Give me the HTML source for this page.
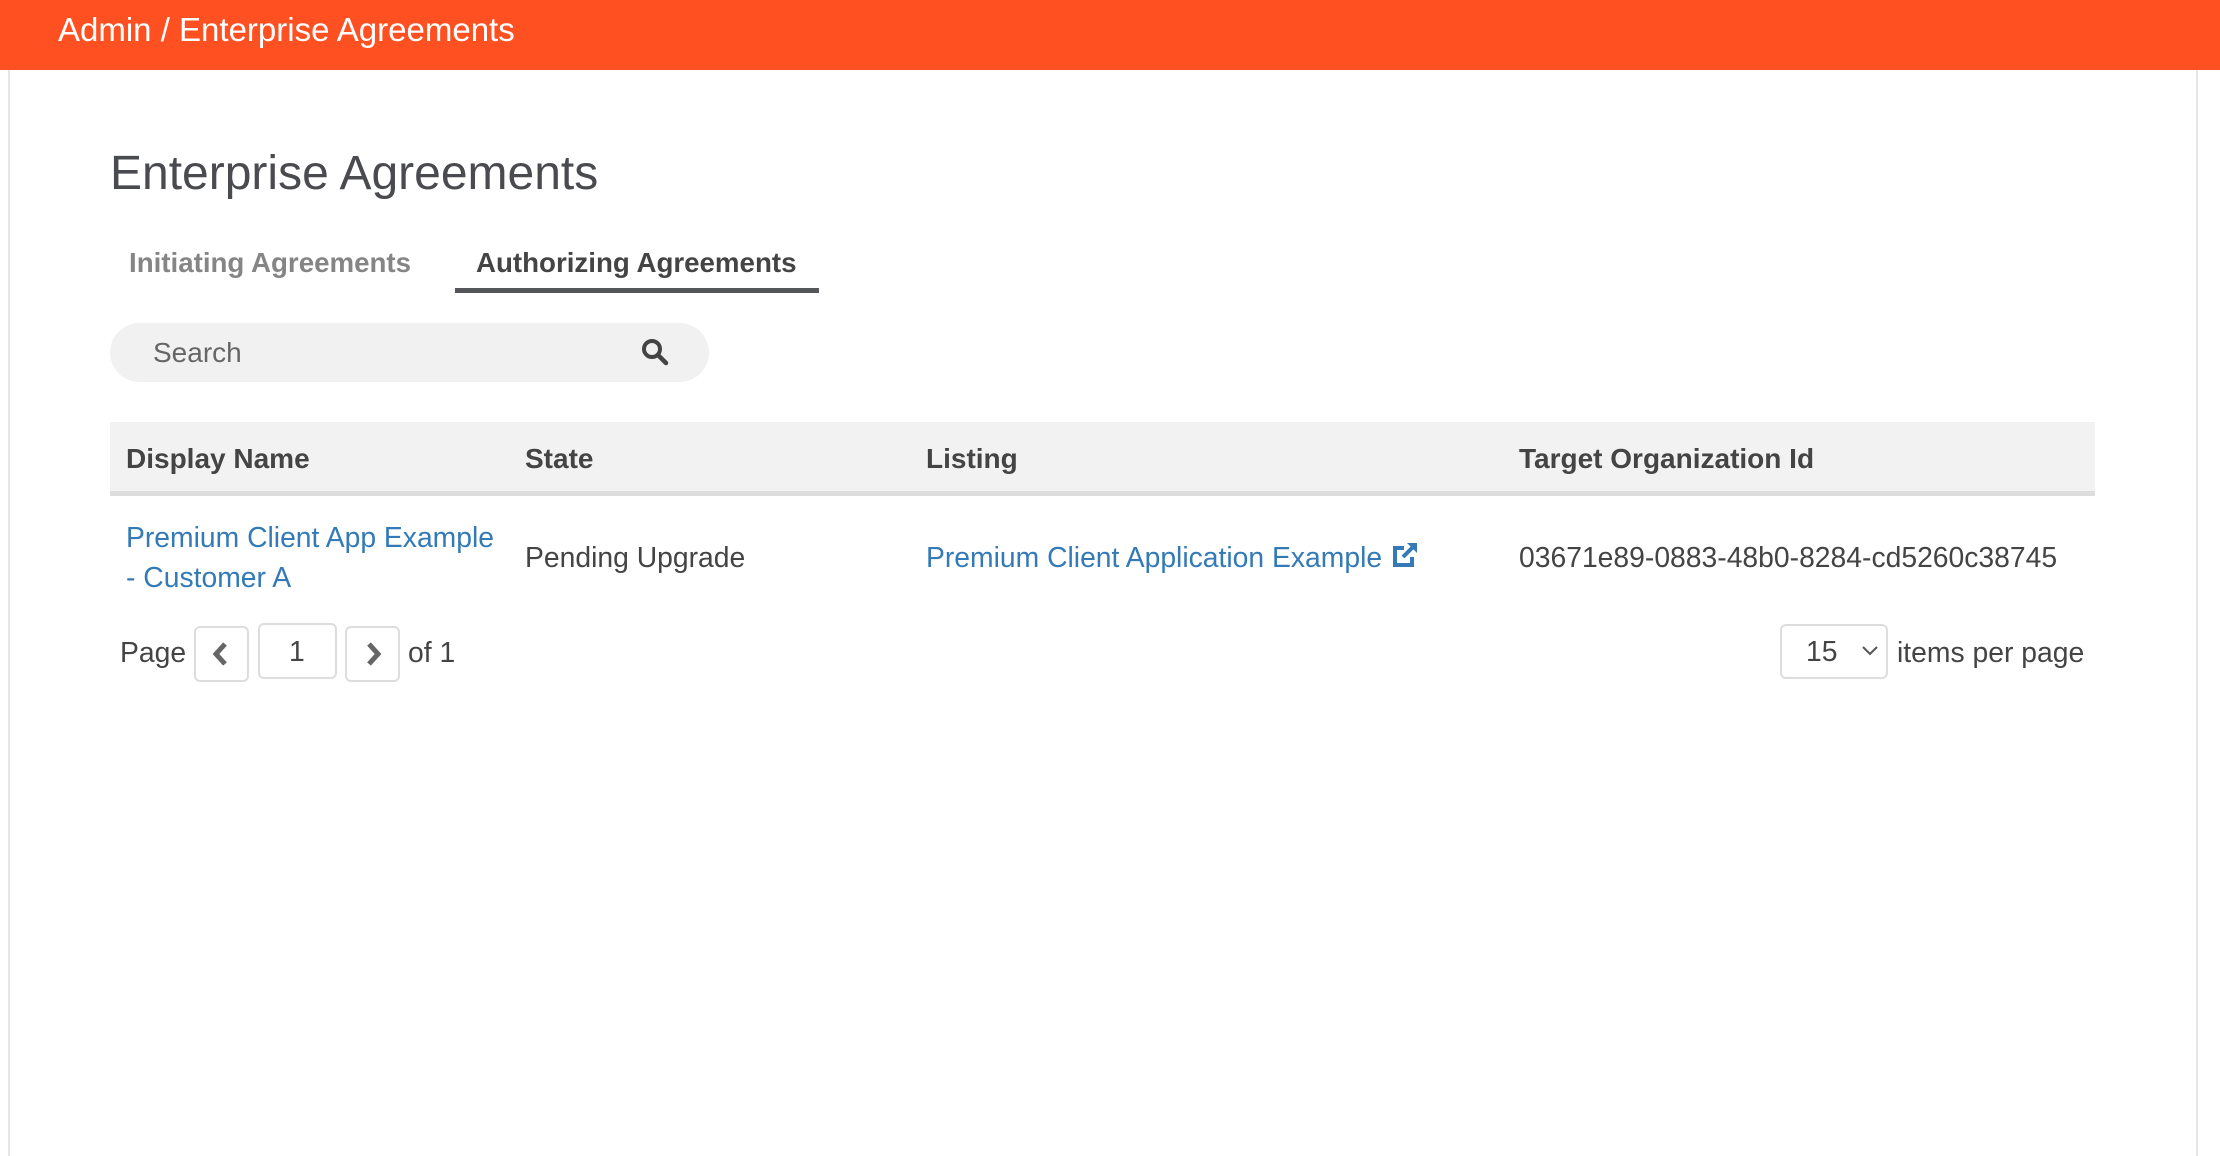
<!DOCTYPE html>
<html><head><meta charset="utf-8"><style>
*{box-sizing:border-box;margin:0;padding:0}
body{width:2220px;height:1156px;background:#fff;font-family:"Liberation Sans",Arial,sans-serif;position:relative;overflow:hidden;color:#444}
.hdr{position:absolute;left:0;top:0;width:2220px;height:70px;background:#ff5021;color:#fff;font-size:33px;line-height:60px;padding-left:58px}
.lb{position:absolute;left:8px;top:70px;width:2px;height:1086px;background:#e6e6e6}
.rb{position:absolute;left:2196px;top:70px;width:2px;height:1086px;background:#e6e6e6}
.a{position:absolute;white-space:nowrap}
h1{position:absolute;left:110px;top:146px;font-size:48px;font-weight:normal;color:#4a4b4f;line-height:56px}
.tab{font-size:27.7px;font-weight:bold;top:246px;line-height:34px}
.search{position:absolute;left:110px;top:323px;width:599px;height:59px;border-radius:30px;background:#f1f1f1}
.th{position:absolute;left:110px;top:422px;width:1985px;height:74px;background:#f2f2f2;border-bottom:5px solid #ddd}
.h{font-size:28px;font-weight:bold;color:#444;top:442px;line-height:34px}
.c{font-size:28.3px;line-height:40px}
.btn{position:absolute;border:2px solid #ddd;border-radius:6px;background:#fff}
</style></head><body>
<div class="hdr">Admin / Enterprise Agreements</div>
<div class="lb"></div><div class="rb"></div>
<h1>Enterprise Agreements</h1>
<div class="a tab" style="left:129px;color:#858585">Initiating Agreements</div>
<div class="a tab" style="left:476px;color:#444">Authorizing Agreements</div>
<div class="a" style="left:455px;top:288px;width:364px;height:5px;background:#55565a"></div>
<div class="search"></div>
<div class="a" style="left:153px;top:334px;font-size:28px;line-height:38px;color:#666">Search</div>
<svg class="a" style="left:641px;top:338px" width="28" height="28" viewBox="0 0 28 28"><circle cx="11" cy="11" r="8" fill="none" stroke="#444" stroke-width="4"/><line x1="17" y1="17" x2="25" y2="25" stroke="#444" stroke-width="4.5" stroke-linecap="round"/></svg>
<div class="th"></div>
<div class="a h" style="left:126px">Display Name</div>
<div class="a h" style="left:525px">State</div>
<div class="a h" style="left:926px">Listing</div>
<div class="a h" style="left:1519px">Target Organization Id</div>
<div class="a c" style="left:126px;top:517px;color:#337ab7">Premium Client App Example</div>
<div class="a c" style="left:126px;top:557px;color:#337ab7">- Customer A</div>
<div class="a c" style="left:525px;top:537px;color:#444">Pending Upgrade</div>
<div class="a c" style="left:926px;top:537px;color:#337ab7">Premium Client Application Example <svg style="vertical-align:-3px" width="30" height="30" viewBox="0 0 30 30"><path d="M22 17v8H5V8h9" fill="none" stroke="#337ab7" stroke-width="4"/><path d="M17 3h10v10z" fill="#337ab7"/><line x1="25" y1="5" x2="13" y2="17" stroke="#337ab7" stroke-width="4"/></svg></div>
<div class="a c" style="left:1519px;top:537px;color:#444">03671e89-0883-48b0-8284-cd5260c38745</div>
<div class="a c" style="left:120px;top:632px;color:#444">Page</div>
<div class="btn" style="left:194px;top:626px;width:55px;height:56px"></div>
<svg class="a" style="left:210px;top:640px" width="22" height="28" viewBox="0 0 22 28"><path d="M15 4L6 14l9 10" fill="none" stroke="#666" stroke-width="5"/></svg>
<div class="btn" style="left:258px;top:623px;width:79px;height:56px"></div>
<div class="a c" style="left:289px;top:631px;color:#444">1</div>
<div class="btn" style="left:345px;top:626px;width:55px;height:56px"></div>
<svg class="a" style="left:362px;top:640px" width="22" height="28" viewBox="0 0 22 28"><path d="M7 4l9 10-9 10" fill="none" stroke="#666" stroke-width="5"/></svg>
<div class="a c" style="left:408px;top:632px;color:#444">of 1</div>
<div class="btn" style="left:1780px;top:624px;width:108px;height:55px"></div>
<div class="a c" style="left:1806px;top:631px;color:#444">15</div>
<svg class="a" style="left:1861px;top:645px" width="18" height="12" viewBox="0 0 18 12"><path d="M2 2l7 7 7-7" fill="none" stroke="#555" stroke-width="2"/></svg>
<div class="a c" style="left:1897px;top:632px;color:#444">items per page</div>
</body></html>
